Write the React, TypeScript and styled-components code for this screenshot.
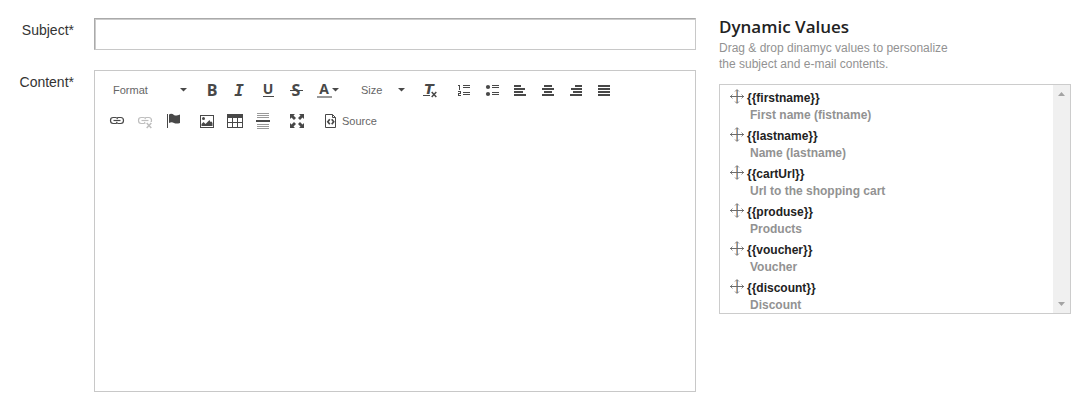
import React from "react";
import styled, { createGlobalStyle } from "styled-components";

const ink = "#484848";
const sans = `"Liberation Sans", Arial, sans-serif`;

const GlobalStyle = createGlobalStyle`
  *, *::before, *::after { box-sizing: border-box; }
  body { margin: 0; background: #fff; color: #333; font-family: ${sans}; }
`;

const Page = styled.main`
  display: grid;
  grid-template-columns: minmax(0, 696fr) minmax(0, 352fr);
  column-gap: 23px;
  align-items: start;
  padding: 18px 9px 15px 0;
`;

const Form = styled.form`
  display: flex;
  flex-direction: column;
  gap: 20px;
`;

const Field = styled.div`
  display: grid;
  grid-template-columns: 74px minmax(0, 1fr);
  column-gap: 20px;
`;

const Label = styled.label`
  padding-top: 4px;
  font-size: 14px;
  line-height: 16px;
  text-align: right;
`;

const SubjectInput = styled.input`
  width: 100%;
  height: 32px;
  padding: 4px 8px;
  border: 1px solid #c8c8c8;
  border-top-color: #aaa;
  border-left-color: #aaa;
  box-shadow: inset 1px 1px 0 #ccc;
  font: 14px ${sans};
  outline: none;
`;

const Editor = styled.div`
  display: flex;
  flex-direction: column;
  border: 1px solid #c8c8c8;
`;

const Toolbar = styled.div`
  display: flex;
  flex-direction: column;
  gap: 3px;
  padding: 5px 8px;
`;

const ToolRow = styled.div`
  display: flex;
  gap: 6px;
`;

const Group = styled.div`
  display: flex;
`;

const ToolButton = styled.button`
  display: flex;
  align-items: center;
  gap: 3px;
  height: 28px;
  padding: 0 6px;
  border: 0;
  background: none;
  color: #666;
  font: 11px ${sans};
`;

const Combo = styled.div<{ $width: number }>`
  display: flex;
  align-items: center;
  width: ${(p) => p.$width}px;
  height: 28px;
  padding-right: 5px;
`;

const ComboSelect = styled.select`
  appearance: none;
  flex: 1;
  min-width: 0;
  height: 28px;
  padding: 0 0 0 10px;
  border: 0;
  background: none;
  color: #666;
  font: 11px ${sans};
`;

const TextArea = styled.textarea`
  display: block;
  width: 100%;
  height: 251px;
  padding: 10px 18px;
  border: 0;
  resize: none;
  outline: none;
  font: 14px ${sans};
`;

const Icon = styled.svg`
  display: block;
  flex: none;
  overflow: visible;
  color: ${ink};
  fill: currentColor;
`;

const Panel = styled.aside`
  display: flex;
  flex-direction: column;
`;

const PanelTitle = styled.h2`
  margin: 0;
  color: #222;
  font: 600 17px/18px "Open Sans", sans-serif;
`;

const PanelHint = styled.p`
  max-width: 240px;
  margin: 4px 0 12px;
  color: #929292;
  font-size: 12px;
  line-height: 16px;
`;

const ListBox = styled.div`
  display: flex;
  border: 1px solid #ccc;
`;

const ValueList = styled.ul`
  flex: 1;
  margin: 0;
  padding: 5px 10px 0;
  list-style: none;
  font-size: 12px;
  font-weight: bold;
  line-height: 17px;
`;

const ValueItem = styled.li`
  height: 38px;
  &:last-child { height: 33px; }
`;

const ValueName = styled.div`
  display: flex;
  gap: 3px;
  color: #222;
`;

const ValueText = styled.div`
  padding-left: 20px;
  color: #929292;
`;

const ScrollTrack = styled.div`
  display: flex;
  flex-direction: column;
  justify-content: space-between;
  align-items: center;
  width: 17px;
  padding: 7px 0;
  background: #f0f0f0;
`;

const glyph = { fontFamily: "Open Sans", fontWeight: 700, textAnchor: "middle" as const };

type Bar = [number, number, number, number];
const Bars = ({ bars, fill }: { bars: Bar[]; fill?: string }) => (
  <g shapeRendering="crispEdges" fill={fill}>
    {bars.map(([x, y, w, h], i) => (
      <rect key={i} x={x} y={y} width={w} height={h} />
    ))}
  </g>
);

const linkShape = (
  <g fill="none" stroke="currentColor" strokeWidth="1.2">
    <path d="M8.5 6.2Q8 4.5 6.5 4.5H4.2Q1.5 4.5 1.5 7.5T4.2 10.5H6.5Q8 10.5 8.3 9.6M7.7 5.4Q8 4.5 9.5 4.5H11.8Q14.5 4.5 14.5 7.5T11.8 10.5H9.5Q8 10.5 7.5 8.8" />
    <path d="M4.5 7.5H11.5" />
  </g>
);

const crossMark = <path d="M9.7 10L14.3 15M14.3 10L9.7 15" stroke="currentColor" strokeWidth="1.5" />;

const icons: Record<string, React.ReactNode> = {
  Bold: <text x="8" y="14" fontSize="16" {...glyph}>B</text>,
  Italic: <text x="7" y="14" fontSize="16" {...glyph} fontFamily="DejaVu Sans Mono" fontStyle="italic">I</text>,
  Underline: <><text x="8" y="12" fontSize="14" {...glyph}>U</text><Bars bars={[[3, 14, 11, 1]]} /></>,
  Strikethrough: <><text x="8" y="14" fontSize="16" {...glyph}>S</text><Bars bars={[[2, 8, 13, 1]]} /></>,
  "Text color": <><text x="8" y="12" fontSize="14" {...glyph}>A</text><Bars bars={[[1, 14, 15, 2]]} fill="#999" /></>,
  "Remove format": (
    <>
      <text x="7" y="12" fontSize="14" {...glyph} fontFamily="DejaVu Sans" fontStyle="italic">T</text>
      <Bars bars={[[1, 13, 7, 1]]} />
      {crossMark}
    </>
  ),
  "Numbered list": (
    <Bars
      bars={[
        [7, 3, 7, 1], [7, 5, 7, 1], [7, 10, 7, 1], [7, 12, 7, 1],
        [2, 3, 2, 1], [3, 3, 1, 5], [2, 9, 3, 1], [4, 9, 1, 3], [2, 11, 3, 1], [2, 11, 1, 3], [2, 13, 3, 1],
      ]}
    />
  ),
  "Bulleted list": (
    <>
      <circle cx="4" cy="5" r="2.1" /><circle cx="4" cy="12" r="2.1" />
      <Bars bars={[[8, 3, 7, 1], [8, 5, 7, 1], [8, 10, 7, 1], [8, 12, 7, 1]]} />
    </>
  ),
  "Align left": <Bars bars={[[2, 3, 7, 2], [2, 6, 11, 2], [2, 9, 9, 2], [2, 12, 12, 2]]} />,
  Center: <Bars bars={[[4, 3, 8, 2], [2, 6, 12, 2], [4, 9, 8, 2], [2, 12, 12, 2]]} />,
  "Align right": <Bars bars={[[7, 3, 7, 2], [3, 6, 11, 2], [5, 9, 9, 2], [2, 12, 12, 2]]} />,
  Justify: <Bars bars={[[2, 3, 12, 2], [2, 6, 12, 2], [2, 9, 12, 2], [2, 12, 12, 2]]} />,
  Link: linkShape,
  Unlink: <g color="#bebebe">{linkShape}<rect x="8.5" y="9" width="7.5" height="7" fill="#fff" />{crossMark}</g>,
  Anchor: <><Bars bars={[[2, 1, 1, 14]]} /><path d="M4 1.5C6 .3 7.5 1 9 2S12 2.6 15 1.5V10C12 11 10.5 10.6 9 9.9S6 9 4 10Z" /></>,
  Image: (
    <>
      <Bars bars={[[1, 2, 14, 1], [1, 14, 14, 1], [1, 2, 1, 13], [14, 2, 1, 13]]} />
      <circle cx="4.5" cy="5.5" r="1.5" />
      <path d="M2.5 13V11L4.5 9L6.5 11L10.5 7L11.5 9L12.5 8.5L13.5 10V13Z" />
    </>
  ),
  Table: (
    <Bars
      bars={[
        [0, 1, 16, 4], [0, 1, 1, 14], [5, 5, 1, 10], [10, 5, 1, 10], [15, 1, 1, 14], [0, 9, 16, 1], [0, 14, 16, 1],
      ]}
    />
  ),
  "Horizontal line": (
    <>
      <Bars bars={[[2, 0, 12, 1], [2, 2, 12, 1], [2, 4, 12, 1], [2, 11, 12, 1], [2, 13, 12, 1], [2, 15, 12, 1]]} fill="#999" />
      <Bars bars={[[1, 7, 14, 2]]} />
    </>
  ),
  Maximize: (
    <path d="M1 1H6L4.5 2.5L7 5L5 7L2.5 4.5L1 6ZM15 1H10L11.5 2.5L9 5L11 7L13.5 4.5L15 6ZM1 15H6L4.5 13.5L7 11L5 9L2.5 11.5L1 10ZM15 15H10L11.5 13.5L9 11L11 9L13.5 11.5L15 10Z" />
  ),
  Source: (
    <g fill="none" stroke="currentColor">
      <path d="M2.5 1.5H9.5L12.5 4.5V14.5H2.5ZM9.5 1.5V4.5H12.5" />
      <path d="M6.8 6.2L4.8 8.7L6.8 11.2M8.7 6.2L10.7 8.7L8.7 11.2" strokeWidth="1.7" />
    </g>
  ),
};

const CaretSlot = styled.span`
  margin-left: -3px;
`;

const Caret = () => (
  <Icon width="7" height="4" viewBox="0 0 7 4"><path d="M0 0H7L3.5 3.5Z" /></Icon>
);

const Tool = ({ name, text, menu }: { name: string; text?: string; menu?: boolean }) => (
  <ToolButton type="button" aria-label={name} title={name} disabled={name === "Unlink"}>
    <Icon width="16" height="16" viewBox="0 0 16 16">{icons[name]}</Icon>
    {text}
    {menu && <CaretSlot><Caret /></CaretSlot>}
  </ToolButton>
);

const ToolSelect = ({ name, width }: { name: string; width: number }) => (
  <Combo $width={width}>
    <ComboSelect aria-label={name}><option>{name}</option></ComboSelect>
    <Caret />
  </Combo>
);

const MoveIcon = () => (
  <Icon width="14" height="14" viewBox="0 0 14 14">
    <g fill="none" stroke="#6b6b6b">
      <path d="M6.5 0V13" stroke="#d3ab85" />
      <path d="M7.5 0V13" stroke="#7593b5" />
      <path d="M0 6.5H14" />
      <path d="M2.5 4.5L.5 6.5L2.5 8.5M11.5 4.5L13.5 6.5L11.5 8.5M5 1.5L7 -.5L9 1.5M5 11.5L7 13.5L9 11.5" strokeWidth=".8" />
    </g>
  </Icon>
);

const values = [
  ["{{firstname}}", "First name (fistname)"],
  ["{{lastname}}", "Name (lastname)"],
  ["{{cartUrl}}", "Url to the shopping cart"],
  ["{{produse}}", "Products"],
  ["{{voucher}}", "Voucher"],
  ["{{discount}}", "Discount"],
];

export default function App() {
  return (
    <>
      <GlobalStyle />
      <Page>
        <Form>
          <Field>
            <Label htmlFor="subject">Subject*</Label>
            <SubjectInput id="subject" type="text" />
          </Field>
          <Field>
            <Label htmlFor="content">Content*</Label>
            <Editor>
              <Toolbar role="toolbar" aria-label="Editor toolbar">
                <ToolRow>
                  <ToolSelect name="Format" width={89} />
                  <Group>
                    {["Bold", "Italic", "Underline", "Strikethrough"].map((n) => <Tool key={n} name={n} />)}
                    <Tool name="Text color" menu />
                  </Group>
                  <ToolSelect name="Size" width={59} />
                  <Group>
                    <Tool name="Remove format" />
                  </Group>
                  <Group>
                    {["Numbered list", "Bulleted list", "Align left", "Center", "Align right", "Justify"].map((n) => (
                      <Tool key={n} name={n} />
                    ))}
                  </Group>
                </ToolRow>
                <ToolRow>
                  <Group>{["Link", "Unlink", "Anchor"].map((n) => <Tool key={n} name={n} />)}</Group>
                  <Group>{["Image", "Table", "Horizontal line"].map((n) => <Tool key={n} name={n} />)}</Group>
                  <Group><Tool name="Maximize" /></Group>
                  <Group><Tool name="Source" text="Source" /></Group>
                </ToolRow>
              </Toolbar>
              <TextArea id="content" />
            </Editor>
          </Field>
        </Form>
        <Panel>
          <PanelTitle>Dynamic Values</PanelTitle>
          <PanelHint>Drag &amp; drop dinamyc values to personalize the subject and e-mail contents.</PanelHint>
          <ListBox>
            <ValueList>
              {values.map(([name, text]) => (
                <ValueItem key={name} draggable>
                  <ValueName><MoveIcon />{name}</ValueName>
                  <ValueText>{text}</ValueText>
                </ValueItem>
              ))}
            </ValueList>
            <ScrollTrack aria-hidden="true">
              <Icon width="7" height="4" viewBox="0 0 7 4"><path d="M0 4H7L3.5 0Z" fill="#a3a3a3" /></Icon>
              <Icon width="7" height="4" viewBox="0 0 7 4"><path d="M0 0H7L3.5 4Z" fill="#a3a3a3" /></Icon>
            </ScrollTrack>
          </ListBox>
        </Panel>
      </Page>
    </>
  );
}
